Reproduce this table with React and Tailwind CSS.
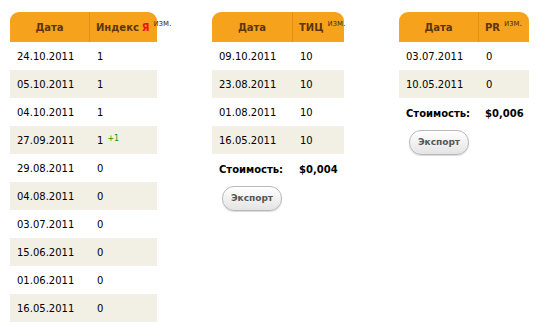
import React from "react";

const f = { fontFamily: '"DejaVu Sans", Verdana, sans-serif' };

function Header({ dateW, valW, children }) {
  return (
    <div className="flex h-[30px] rounded-t-[9px] bg-[#f6a21c] text-[10px] font-bold text-[#5b3510]">
      <div className={`flex items-center justify-center border-r border-[#e4901a] ${dateW}`}>Дата</div>
      <div className={`flex items-center whitespace-nowrap pl-[6px] ${valW}`}>{children}</div>
    </div>
  );
}

function Rows({ rows, dateW, valW }) {
  return rows.map((r, i) => (
    <div key={i} className={`flex h-[28px] items-center text-[10px] text-black ${i % 2 ? "bg-[#f2f0e5]" : "bg-white"}`}>
      <div className={`pl-[7px] ${dateW}`}>{r[0]}</div>
      <div className={`pl-[7px] ${valW}`}>
        {r[1]}
        {r[2] && <sup className="relative top-[-3px] ml-[4px] text-[8px] text-[#119911]">{r[2]}</sup>}
      </div>
    </div>
  ));
}

function Cost({ value, dateW }) {
  return (
    <>
      <div className="flex h-[30px] items-center text-[10px] font-bold text-black">
        <div className={`pl-[7px] ${dateW}`}>Стоимость:</div>
        <div className="pl-[6px]">{value}</div>
      </div>
      <div className="pl-[10px]">
        <button className="mt-[1px] h-[25px] w-[60px] rounded-[12px] border border-[#b9b9b9] bg-gradient-to-b from-[#ffffff] to-[#e4e4e4] text-[9px] font-bold text-[#555555] shadow-[0_1px_1px_rgba(0,0,0,0.15)]" style={f}>
          Экспорт
        </button>
      </div>
    </>
  );
}

const izm = <sup className="relative top-[-3px] ml-[4px] text-[8px] font-normal">изм.</sup>;

export default function App() {
  return (
    <div className="flex h-[322px] w-[554px] items-start gap-[55px] bg-white pl-[10px] pt-[12px]" style={f}>
      <div className="w-[147px]">
        <Header dateW="w-[80px]" valW="w-[67px]">
          Индекс <span className="ml-[3px] text-[#ee1111]">Я</span>{izm}
        </Header>
        <Rows
          dateW="w-[80px]"
          valW="w-[67px]"
          rows={[
            ["24.10.2011", "1"],
            ["05.10.2011", "1"],
            ["04.10.2011", "1"],
            ["27.09.2011", "1", "+1"],
            ["29.08.2011", "0"],
            ["04.08.2011", "0"],
            ["03.07.2011", "0"],
            ["15.06.2011", "0"],
            ["01.06.2011", "0"],
            ["16.05.2011", "0"],
          ]}
        />
      </div>
      <div className="w-[132px]">
        <Header dateW="w-[81px]" valW="w-[51px]">
          ТИЦ{izm}
        </Header>
        <Rows
          dateW="w-[81px]"
          valW="w-[51px]"
          rows={[
            ["09.10.2011", "10"],
            ["23.08.2011", "10"],
            ["01.08.2011", "10"],
            ["16.05.2011", "10"],
          ]}
        />
        <Cost value="$0,004" dateW="w-[81px]" />
      </div>
      <div className="w-[130px]">
        <Header dateW="w-[80px]" valW="w-[50px]">
          PR{izm}
        </Header>
        <Rows
          dateW="w-[80px]"
          valW="w-[50px]"
          rows={[
            ["03.07.2011", "0"],
            ["10.05.2011", "0"],
          ]}
        />
        <Cost value="$0,006" dateW="w-[80px]" />
      </div>
    </div>
  );
}
